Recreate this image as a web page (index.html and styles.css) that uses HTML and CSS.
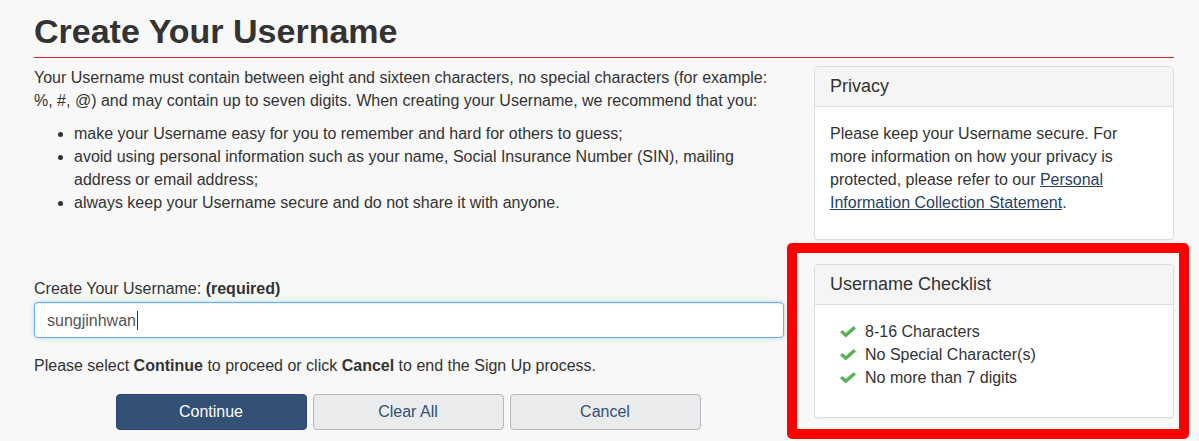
FILE: index.html
```html
<!DOCTYPE html>
<html lang="en">
<head>
<meta charset="utf-8">
<title>Create Your Username</title>
<link rel="stylesheet" href="styles.css">
</head>
<body>
<main class="page">
  <h1 class="title">Create Your Username</h1>
  <div class="columns">
    <section class="main-col">
      <p class="intro">Your Username must contain between eight and sixteen characters, no special characters (for example: %, #, @) and may contain up to seven digits. When creating your Username, we recommend that you:</p>
      <ul class="tips">
        <li>make your Username easy for you to remember and hard for others to guess;</li>
        <li>avoid using personal information such as your name, Social Insurance Number (SIN), mailing address or email address;</li>
        <li>always keep your Username secure and do not share it with anyone.</li>
      </ul>
      <form class="form">
        <label class="label" for="username">Create Your Username: <strong>(required)</strong></label>
        <div class="input"><span class="input-text">sungjinhwan</span><span class="caret"></span></div>
        <p class="instructions">Please select <strong>Continue</strong> to proceed or click <strong>Cancel</strong> to end the Sign Up process.</p>
        <div class="buttons">
          <button type="button" class="btn btn-primary">Continue</button>
          <button type="button" class="btn btn-default">Clear All</button>
          <button type="button" class="btn btn-default">Cancel</button>
        </div>
      </form>
    </section>
    <aside class="side-col">
      <div class="panel panel-privacy">
        <div class="panel-heading">Privacy</div>
        <div class="panel-body">
          <p class="panel-text">Please keep your Username secure. For more information on how your privacy is protected, please refer to our <a href="#" class="link">Personal Information Collection Statement</a>.</p>
        </div>
      </div>
      <div class="highlight-wrap">
        <div class="panel panel-checklist">
          <div class="panel-heading">Username Checklist</div>
          <div class="panel-body checklist-body">
            <ul class="checklist">
              <li><svg class="check" viewBox="0 0 16 12" width="16" height="12"><path d="M0 6.3 L2.4 4 L5.8 7.1 L13.6 0 L16 2.4 L5.8 11.6 Z" fill="#5cb05c"/></svg>8-16 Characters</li>
              <li><svg class="check" viewBox="0 0 16 12" width="16" height="12"><path d="M0 6.3 L2.4 4 L5.8 7.1 L13.6 0 L16 2.4 L5.8 11.6 Z" fill="#5cb05c"/></svg>No Special Character(s)</li>
              <li><svg class="check" viewBox="0 0 16 12" width="16" height="12"><path d="M0 6.3 L2.4 4 L5.8 7.1 L13.6 0 L16 2.4 L5.8 11.6 Z" fill="#5cb05c"/></svg>No more than 7 digits</li>
            </ul>
          </div>
        </div>
        <div class="highlight"></div>
      </div>
    </aside>
  </div>
</main>
</body>
</html>
```

FILE: styles.css
```css
* { box-sizing: border-box; }
html, body { margin: 0; padding: 0; }
body {
  background: #f8f8f8;
  color: #333;
  font-family: "Liberation Sans", Arial, sans-serif;
  font-size: 16px;
  line-height: 23px;
  min-height: 441px;
}
.page {
  width: 1174px;
  min-height: 441px;
  padding: 12px 0 0 34px;
}
.title {
  margin: 0 0 8px;
  font-size: 34px;
  line-height: 38px;
  font-weight: bold;
  color: #333;
  padding-bottom: 7px;
  border-bottom: 1px solid #c0252d;
}
.columns {
  display: flex;
  gap: 30px;
}
.main-col { width: 750px; }
.side-col { width: 360px; }
.intro { margin: 0 0 10px; }
.tips {
  margin: 0 0 10px;
  padding-left: 40px;
}
.form {
  margin-top: 63px;
}
.label {
  display: block;
  margin-bottom: 2px;
}
.input {
  height: 36px;
  background: #fff;
  border: 1px solid #66afe9;
  border-radius: 4px;
  box-shadow: inset 0 1px 1px rgba(0,0,0,.075), 0 0 4px rgba(102,175,233,.5);
  padding: 0 12px;
  display: flex;
  align-items: center;
  color: #555;
}
.caret {
  display: inline-block;
  width: 1px;
  height: 19px;
  background: #333;
  margin-left: 1px;
}
.instructions {
  margin: 16px 0 17px;
}
.buttons {
  display: flex;
  justify-content: center;
  gap: 6px;
  padding-right: 2px;
}
.btn {
  width: 191px;
  height: 36px;
  font-family: inherit;
  font-size: 16px;
  border-radius: 4px;
  padding: 0;
}
.btn-primary {
  background: #335075;
  border: 1px solid #2b4380;
  color: #fff;
}
.btn-default {
  background: #eaebed;
  border: 1px solid #b5b8bd;
  color: #335075;
}
.panel {
  background: #fff;
  border: 1px solid #ddd;
  border-radius: 4px;
  box-shadow: 0 1px 1px rgba(0,0,0,.05);
}
.panel-privacy { margin-bottom: 24px; }
.panel-heading {
  background: #f5f5f5;
  border-bottom: 1px solid #ddd;
  border-radius: 3px 3px 0 0;
  padding: 10px 15px;
  font-size: 18px;
  line-height: 19px;
  color: #333;
}
.panel-body {
  padding: 15px;
}
.checklist-body {
  padding: 15px 15px 18px;
}
.panel-text { margin: 0 0 10px; }
.link {
  color: #284162;
  text-decoration: underline;
}
.checklist {
  list-style: none;
  margin: 0 0 10px;
  padding-left: 10px;
}
.checklist li {
  display: flex;
  align-items: center;
}
.check {
  margin-right: 9px;
  flex: none;
}
.highlight-wrap {
  position: relative;
}
.highlight {
  position: absolute;
  left: -27px;
  right: -15px;
  top: -21px;
  bottom: -21px;
  border: 10px solid #ff0000;
  border-radius: 5px;
  pointer-events: none;
}
```
